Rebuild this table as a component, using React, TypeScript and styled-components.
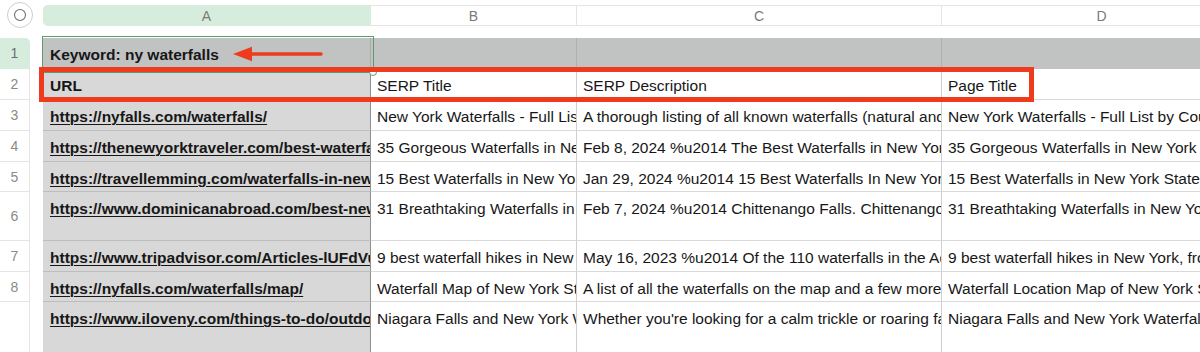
import React from "react";
import styled, { createGlobalStyle, css } from "styled-components";

const GlobalStyle = createGlobalStyle`
  html, body { margin: 0; padding: 0; background: #ffffff; }
  body { font-family: "Liberation Sans", Arial, Helvetica, sans-serif; overflow: hidden; }
`;

const RED = "#ee3b1d";
const GREEN_FILL = "#d6ecdd";

const COLS = [328, 206, 365, 320];

const Sheet = styled.div`
  width: 1200px;
  height: 352px;
  overflow: hidden;
  position: relative;
  background: #ffffff;
`;

const HeaderBar = styled.div`
  display: flex;
  height: 38px;
`;

const Corner = styled.div`
  width: 43px;
  flex: none;
  display: flex;
  align-items: flex-start;
  padding: 1px 0 0 6px;
  box-sizing: border-box;
`;

const ColHead = styled.div<{ $w: number; $active?: boolean }>`
  width: ${(p) => p.$w}px;
  flex: none;
  height: 21px;
  margin-top: 5px;
  box-sizing: border-box;
  display: flex;
  align-items: center;
  justify-content: center;
  font-size: 14px;
  color: #7a7a7a;
  border-top: 1px solid #e4e4e4;
  border-bottom: 1px solid #e4e4e4;
  border-right: 1px solid #e4e4e4;
  background: #ffffff;
  ${(p) =>
    p.$active &&
    css`
      background: ${GREEN_FILL};
      border-color: ${GREEN_FILL};
      border-radius: 5px 0 0 5px;
    `}
`;

const Row = styled.div<{ $h: number }>`
  display: flex;
  height: ${(p) => p.$h}px;
  position: relative;
`;

const RowNum = styled.div<{ $active?: boolean }>`
  width: 30px;
  flex: none;
  margin-right: 13px;
  box-sizing: border-box;
  border-bottom: 1px solid #e4e4e4;
  border-right: 1px solid #e4e4e4;
  display: flex;
  align-items: center;
  justify-content: center;
  font-size: 14px;
  color: #8a8a8a;
  background: #ffffff;
  ${(p) =>
    p.$active &&
    css`
      background: ${GREEN_FILL};
      border-color: ${GREEN_FILL};
      border-top-right-radius: 5px;
      color: #6f6f6f;
    `}
`;

type Variant = "keyA" | "band" | "colA" | "data";

const Cell = styled.div<{ $w: number; $v: Variant }>`
  width: ${(p) => p.$w}px;
  flex: none;
  box-sizing: border-box;
  padding: 7px 0 0 6px;
  line-height: 19px;
  font-size: 15.5px;
  white-space: nowrap;
  overflow: hidden;
  color: #171717;
  border-bottom: 1px solid #d9d9d9;
  border-right: 1px solid #cfcfcf;
  background: #ffffff;
  ${(p) =>
    p.$v === "keyA" &&
    css`
      background: #c1c2c2;
      border-bottom-color: #c1c2c2;
      border-right-color: #a9a9a9;
      font-weight: bold;
      padding-left: 7px;
    `}
  ${(p) =>
    p.$v === "band" &&
    css`
      background: #c1c2c2;
      border-bottom-color: #c1c2c2;
      border-right-color: #b0b0b0;
    `}
  ${(p) =>
    p.$v === "colA" &&
    css`
      background: #d8d8d8;
      border-bottom-color: #bdbdbd;
      border-right-color: #8f8f8f;
      font-weight: bold;
      padding-left: 7px;
    `}
`;

const Link = styled.span`
  text-decoration: underline;
  text-decoration-thickness: 1px;
  text-underline-offset: 2px;
`;

const Selection = styled.div`
  position: absolute;
  left: 42px;
  top: -2px;
  width: 332px;
  height: 37px;
  border: 1px solid #5e9a6e;
  box-sizing: border-box;
  z-index: 1;
  pointer-events: none;
`;

const Handle = styled.div`
  position: absolute;
  right: -4px;
  bottom: -4px;
  width: 6px;
  height: 6px;
  border-radius: 50%;
  background: #ffffff;
  border: 1px solid #5e9a6e;
`;

const Arrow = styled.svg`
  position: absolute;
  left: 233px;
  top: 8px;
  z-index: 3;
`;

const RedBox = styled.div`
  position: absolute;
  left: 39px;
  top: -2px;
  width: 995px;
  height: 35px;
  border: 5px solid ${RED};
  box-sizing: border-box;
  z-index: 2;
  pointer-events: none;
`;

const rows: { h: number; a: string; b: string; c: string; d: string }[] = [
  {
    h: 31,
    a: "https://nyfalls.com/waterfalls/",
    b: "New York Waterfalls - Full List by County",
    c: "A thorough listing of all known waterfalls (natural and man-made) in New York State",
    d: "New York Waterfalls - Full List by County | NY Falls",
  },
  {
    h: 31,
    a: "https://thenewyorktraveler.com/best-waterfalls-in-new-york/",
    b: "35 Gorgeous Waterfalls in New York State",
    c: "Feb 8, 2024 %u2014 The Best Waterfalls in New York State",
    d: "35 Gorgeous Waterfalls in New York State (+ Map)",
  },
  {
    h: 30,
    a: "https://travellemming.com/waterfalls-in-new-york/",
    b: "15 Best Waterfalls in New York State",
    c: "Jan 29, 2024 %u2014 15 Best Waterfalls In New York State",
    d: "15 Best Waterfalls in New York StateI",
  },
  {
    h: 49,
    a: "https://www.dominicanabroad.com/best-new-york-waterfalls/",
    b: "31 Breathtaking Waterfalls in New York",
    c: "Feb 7, 2024 %u2014 Chittenango Falls. Chittenango Falls State Park",
    d: "31 Breathtaking Waterfalls in New York State",
  },
  {
    h: 31,
    a: "https://www.tripadvisor.com/Articles-lUFdVuDnSqb0-Best_waterfall_hikes",
    b: "9 best waterfall hikes in New York",
    c: "May 16, 2023 %u2014 Of the 110 waterfalls in the Adirondacks",
    d: "9 best waterfall hikes in New York, from the Adirondacks",
  },
  {
    h: 30,
    a: "https://nyfalls.com/waterfalls/map/",
    b: "Waterfall Map of New York State",
    c: "A list of all the waterfalls on the map and a few more",
    d: "Waterfall Location Map of New York State",
  },
  {
    h: 110,
    a: "https://www.iloveny.com/things-to-do/outdoors/waterfalls/",
    b: "Niagara Falls and New York Waterfalls",
    c: "Whether you're looking for a calm trickle or roaring falls",
    d: "Niagara Falls and New York Waterfalls | I LOVE NY",
  },
];

const CornerIcon = () => (
  <svg width="28" height="28" viewBox="0 0 28 28">
    <circle cx="14" cy="14" r="12.5" fill="#ffffff" stroke="#cfcfcf" strokeWidth="1" />
    <circle cx="14" cy="14" r="5.5" fill="none" stroke="#6d6d6d" strokeWidth="1.1" />
  </svg>
);

export default function App() {
  return (
    <>
      <GlobalStyle />
      <Sheet>
        <HeaderBar>
          <Corner>
            <CornerIcon />
          </Corner>
          <ColHead $w={COLS[0]} $active>
            A
          </ColHead>
          <ColHead $w={COLS[1]}>B</ColHead>
          <ColHead $w={COLS[2]}>C</ColHead>
          <ColHead $w={COLS[3]}>D</ColHead>
        </HeaderBar>

        <Row $h={31}>
          <RowNum $active>1</RowNum>
          <Cell $w={COLS[0]} $v="keyA">
            Keyword: ny waterfalls
          </Cell>
          <Cell $w={COLS[1]} $v="band" />
          <Cell $w={COLS[2]} $v="band" />
          <Cell $w={COLS[3]} $v="band" />
          <Selection>
            <Handle />
          </Selection>
          <Arrow width="92" height="16" viewBox="0 0 92 16">
            <path d="M14 8 H88" stroke={RED} strokeWidth="3.4" strokeLinecap="round" />
            <path d="M0 8 L19 0.8 L19 15.2 Z" fill={RED} />
          </Arrow>
        </Row>

        <Row $h={31}>
          <RowNum>2</RowNum>
          <Cell $w={COLS[0]} $v="colA">
            URL
          </Cell>
          <Cell $w={COLS[1]} $v="data">
            SERP Title
          </Cell>
          <Cell $w={COLS[2]} $v="data">
            SERP Description
          </Cell>
          <Cell $w={COLS[3]} $v="data">
            Page Title
          </Cell>
          <RedBox />
        </Row>

        {rows.map((r, i) => (
          <Row $h={r.h} key={i}>
            <RowNum>{i + 3}</RowNum>
            <Cell $w={COLS[0]} $v="colA">
              <Link>{r.a}</Link>
            </Cell>
            <Cell $w={COLS[1]} $v="data">
              {r.b}
            </Cell>
            <Cell $w={COLS[2]} $v="data">
              {r.c}
            </Cell>
            <Cell $w={COLS[3]} $v="data">
              {r.d}
            </Cell>
          </Row>
        ))}
      </Sheet>
    </>
  );
}
